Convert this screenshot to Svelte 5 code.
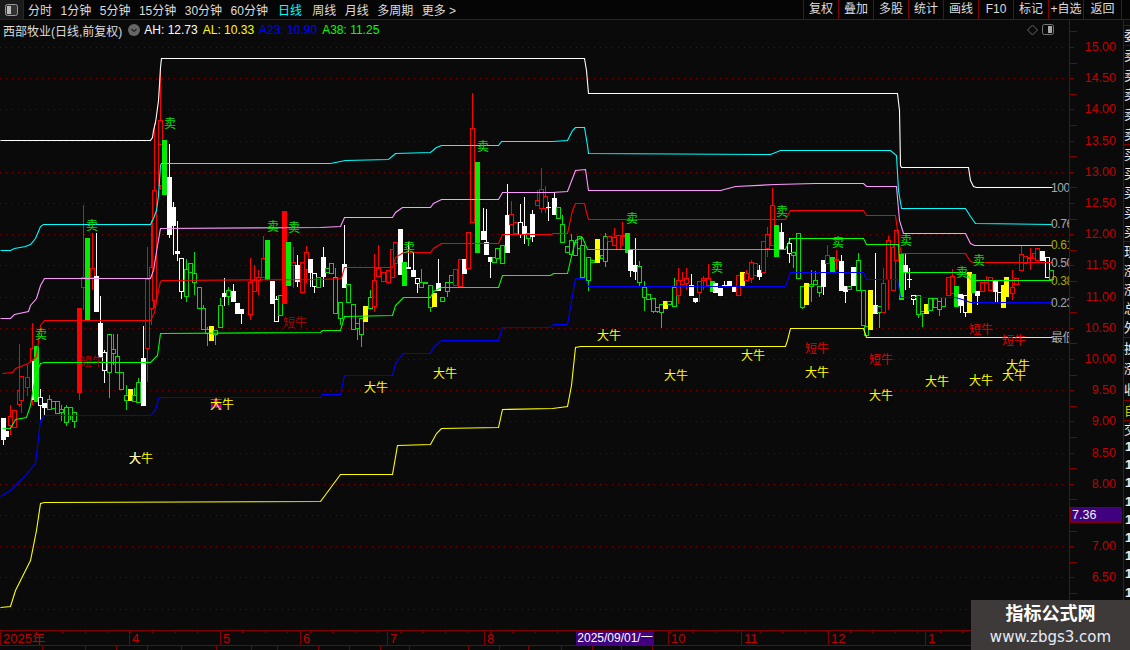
<script>
  const navItems = ['分时','1分钟','5分钟','15分钟','30分钟','60分钟','日线','周线','月线','多周期','更多 >'];
  const toolItems = ['复权','叠加','多股','统计','画线','F10','标记','+自选','返回'];
  const Y = (p) => 47 + (15 - p) * 62.4;
  const majors = [];
  for (let p = 15; p >= 6; p -= 0.5) majors.push(p);
  const axisTicks = [];
  for (let y = 31.4; y < 625; y += 15.6) axisTicks.push(y);

  const lines = [
    ['#ffffff','0,140 150,140 152,137 153,130 155,122 156,115 158,100 159,84 160,67 161,58 584,58 586,70 588,93 897,93 899,110 900,165 901,167 968,167 970,180 973,186 976,187 1052,187'],
    ['#00ffff','0,250 10,250 14,248 25,246 30,244 35,238 40,226 43,224 150,224 153,218 156,210 158,195 160,165 161,163 330,163 345,160 388,159 395,153 430,152 436,147 441,145 498,145 501,141 552,141 567,140 572,130 575,127 584,127 587,145 588,153 770,154 780,150 890,150 896,155 898,190 901,208 965,208 970,216 975,223 1052,224'],
    ['#ff99ff','0,318 10,318 14,314 28,311 30,305 36,298 40,285 44,278 150,278 153,270 157,245 160,228 320,227 340,226 344,217 392,217 395,212 402,207 430,207 433,203 441,199 498,199 502,192 552,192 567,191 572,178 575,170 585,169 588,190 720,190 735,186 775,184 815,183 863,183 866,186 896,186 899,220 903,233 965,233 970,243 974,245 1052,245'],
    ['#ff0000','2,373 12,372 15,368 20,366 28,363 36,356 40,325 44,320 150,320 154,312 158,290 160,281 161,280 320,279 341,278 344,267 392,267 395,257 403,252 430,252 433,248 441,243 498,243 502,234 550,234 553,233 567,233 572,210 575,203 584,203 586,212 588,219 785,219 790,210 863,210 866,215 895,215 899,245 901,253 965,253 970,261 973,262 1052,262'],
    ['#00ff00','2,428 10,428 15,419 26,417 30,405 35,375 40,363 44,362 150,362 157,355 160,333 320,332 322,330 340,330 344,316 392,315 395,305 403,297 430,297 433,291 441,287 498,287 502,275 550,275 553,273 567,273 570,260 575,240 582,237 587,249 785,249 790,238 863,238 866,244 898,244 900,272 965,272 970,279 973,280 1052,280'],
    ['#0000ff','0,496 10,490 25,475 35,463 40,420 44,415 150,415 155,410 158,398 160,397 320,397 322,394 340,394 344,375 392,375 395,363 403,353 430,353 433,347 441,340 498,340 502,327 550,327 553,324 567,324 570,307 575,278 584,278 588,286 785,286 790,272 863,272 866,279 897,279 900,297 955,297 965,300 970,302 1052,302'],
    ['#ffff00','0,607 10,606 15,590 25,570 30,560 36,530 40,503 44,502 320,501 340,474 392,474 397,445 430,444 436,433 441,428 498,427 502,409 552,408 567,406 571,385 575,347 580,346 785,346 787,340 790,328 863,328 866,337 1052,337']
  ];

  const raw = `3 W 418 440 418 445;6 W 431 437 0 0;10 R 416 425 405 435;14 R 410 427 0 0;19 R 390 404 344 407;21 R 376 400 0 413;27 R 377 387 365 396;32 R 348 360 323 405;34 W 361 400 0 0;36 B 346 402 0 0;40 T 397 405 389 420;44 W 403 408 0 415;49 G 399 409 395 0;53 G 401 408 0 0;57 G 401 413 0 0;61 G 409 412 405 421;66 G 407 422 405 426;70 G 407 415 0 420;74 G 412 421 0 428;
79 F 308 393 0 400;83 R 277 287 205 310;87 B 238 320 0 0;92 R 268 277 233 290;96 W 276 312 233 0;100 W 323 358 296 0;104 T 352 370 350 383;109 G 334 372 0 398;113 G 349 353 334 365;117 G 356 372 334 0;121 G 372 389 0 0;126 G 395 400 385 410;130 Y 389 401 0 0;134 G 395 401 388 0;138 G 382 402 378 0;143 W 358 406 326 0;147 R 279 348 247 382;151 R 267 308 220 325;154 R 190 300 123 308;160 R 120 144 67 190;160 R 144 185 0 0;164 B 140 195 0 0;169 W 177 235 144 238;173 W 207 226 202 255;177 W 251 254 221 261;181 T 258 291 0 299;186 G 269 296 259 302;190 G 263 272 0 0;194 G 273 282 252 295;199 G 287 308 0 0;203 G 308 329 305 0;207 G 329 333 327 346;211 Y 326 341 0 0;215 G 330 334 0 345;220 G 305 327 298 0;224 W 293 297 278 306;228 G 290 296 287 305;233 W 291 302 284 0;237 W 303 314 0 0;241 W 309 314 0 324;250 R 282 314 258 320;254 R 280 291 265 0;258 R 277 280 270 295;263 R 258 277 236 0;267 B 240 280 0 0;272 W 281 304 0 0;276 T 299 321 296 0;280 G 295 315 0 0;
284 F 211 304 0 0;288 B 242 286 0 0;293 R 262 265 247 288;297 W 265 282 255 287;302 R 262 292 0 0;306 R 252 269 246 283;310 W 259 273 0 287;314 T 273 286 0 293;318 G 277 287 0 0;323 W 257 277 247 287;327 G 268 272 0 0;331 G 263 273 0 0;335 G 277 313 268 0;340 G 302 318 0 325;344 W 264 288 225 0;348 G 284 302 0 0;353 G 304 329 0 0;357 G 323 328 0 340;361 G 318 334 0 347;365 Y 306 322 0 0;370 G 297 308 290 0;374 R 280 306 254 312;378 R 268 276 245 0;383 R 272 281 0 0;388 R 270 282 0 0;392 R 249 277 0 0;395 R 242 263 0 0;400 W 229 275 0 0;404 B 262 286 0 0;408 W 267 269 242 0;413 W 270 277 253 0;417 T 278 283 0 293;421 G 282 287 269 0;425 G 282 283 0 0;430 G 285 307 0 312;434 Y 293 307 0 0;438 W 283 291 259 0;442 G 297 301 0 0;447 G 282 291 0 297;451 G 275 282 0 0;455 R 269 285 0 0;460 R 259 286 0 0;464 W 259 274 0 0;468 R 232 268 0 0;472 R 128 222 93 0;477 B 162 253 0 0;483 W 231 240 208 0;486 W 242 255 209 0;490 W 257 262 0 278;494 G 257 262 0 0;497 G 248 258 0 0;502 G 245 263 0 0;507 W 215 253 184 0;511 R 214 224 201 0;515 R 222 233 0 0;520 T 222 234 204 238;524 W 226 235 197 244;528 G 233 238 0 246;532 W 214 237 210 242;537 R 200 205 190 0;541 R 189 208 168 213;545 R 196 208 186 213;548 W 207 208 202 221;554 W 198 215 192 0;558 G 207 218 0 0;562 G 224 242 215 0;567 G 246 252 0 0;571 G 240 254 234 0;575 G 242 255 0 0;579 G 236 248 0 0;
582 G 245 277 0 0;588 G 257 280 0 291;592 G 260 262 0 0;597 Y 239 263 0 0;602 G 255 258 0 0;605 G 236 261 233 267;609 R 236 241 0 0;614 R 237 245 228 0;618 R 235 249 0 0;622 R 235 236 222 246;627 B 233 253 0 0;630 W 250 271 0 277;635 W 265 272 238 280;639 G 266 282 261 286;644 G 287 297 281 311;648 G 294 299 0 0;653 G 298 311 0 313;657 G 307 311 0 313;661 G 304 312 0 328;665 Y 301 309 0 0;669 G 301 304 0 0;674 G 287 306 278 0;678 R 280 295 268 304;682 R 280 284 272 0;686 R 278 283 268 290;691 W 285 296 274 0;695 W 298 302 0 303;699 R 281 292 0 302;703 R 278 280 276 290;708 R 278 285 264 0;712 B 281 292 0 0;715 W 283 293 0 0;720 W 288 296 0 0;724 W 285 287 281 0;729 W 281 287 0 0;734 W 287 292 0 0;738 R 275 295 0 0;742 Y 272 287 0 0;746 R 273 280 270 0;751 R 262 278 260 283;755 R 263 275 0 0;759 W 270 277 265 280;763 R 241 272 0 0;767 R 234 248 227 257;772 R 205 245 188 0;776 B 225 257 0 0;781 W 232 249 223 0;789 T 243 253 238 263;793 G 252 255 0 268;798 G 233 278 0 0;802 G 286 307 0 309;806 Y 283 305 0 0;811 G 284 286 270 302;815 G 280 284 271 0;819 G 286 292 0 297;823 W 260 287 0 295;827 R 255 263 245 0;832 B 257 273 0 0;836 R 259 260 250 270;841 W 261 291 255 0;845 W 286 292 0 303;849 G 286 289 0 0;853 W 267 286 0 0;
858 G 260 290 253 0;863 G 290 325 0 0;866 G 326 335 0 0;870 Y 290 330 0 0;875 W 305 314 253 0;879 G 306 312 0 328;883 R 283 312 268 0;888 R 240 279 236 310;893 R 247 290 245 0;896 R 230 260 0 0;901 B 254 300 0 0;905 W 265 273 254 290;909 W 279 280 268 288;913 T 295 299 0 305;918 G 295 314 0 318;922 G 311 313 0 327;926 Y 304 314 0 0;930 G 298 310 0 0;935 G 298 307 0 0;939 G 301 309 0 316;943 G 297 306 0 0;948 R 277 295 0 0;952 R 276 293 269 0;956 B 286 307 0 0;960 W 294 306 0 313;965 T 295 312 0 317;969 Y 272 313 0 0;973 B 274 293 0 0;977 W 291 296 0 305;982 R 282 291 0 0;986 R 280 282 276 0;990 R 277 290 0 0;995 W 281 292 0 302;999 T 292 302 0 0;1003 Y 285 308 0 0;1006 Y 277 297 0 0;1012 R 287 293 270 300;1016 R 278 284 0 0;1021 R 254 270 246 0;1025 R 256 263 0 0;1030 R 257 258 248 270;1034 R 253 258 0 0;1037 R 248 260 0 0;1042 W 251 261 0 0;1047 T 257 277 0 0;1051 G 270 279 0 0`;

  const colors = { R:'#ff0000', G:'#00e000', W:'#ffffff', T:'#ffffff', Y:'#ffff00', B:'#00ee00', F:'#ff0000' };
  const candles = raw.split(';').map((s) => {
    const [x, t, top, bot, hi, lo] = s.trim().split(' ');
    return { x:+x, t, top:+top, bot:+bot, hi:+hi || +top, lo:+lo || +bot, c:colors[t], solid:'WYBF'.includes(t) };
  });

  const sell = [[41,334],[92,225],[170,123],[273,226],[294,227],[409,247],[483,146],[632,218],[717,267],[782,211],[838,242],[906,240],[962,272],[979,260]];
  const big = [[141,458],[222,404],[376,387],[445,373],[609,335],[676,375],[753,355],[817,372],[881,395],[937,381],[981,380],[1014,375],[1018,365]];
  const short = [[92,361,'dim'],[295,322,'dim'],[817,348,''],[881,359,''],[981,329,''],[1014,340,'']];
  const ends = [['100',187,'gray'],['0.76',223,'gray'],['0.61',244,'olive'],['0.50',262,'gray'],['0.38',280,'olive'],['0.23',302,'gray'],['最低',337,'gray']];

  const months = [[0,'2025年'],[129,'4'],[220,'5'],[300,'6'],[387,'7'],[484,'8'],[668,'10'],[741,'11'],[828,'12'],[925,'1']];
  const timeTicks = [];
  for (let x = 62; x < 970; x += 22.5) timeTicks.push(Math.round(x));

  const side = [
    { h:20, t:['委'], k:'' }, { h:99, t:['卖','卖','卖','卖','卖'], k:'' }, { h:97, t:['买','买','买','买','买'], k:'' },
    { h:96, t:['现','涨','涨','总','外'], k:'' }, { h:63, t:['换','涨','收'], k:'' }, { h:20, t:['自'], k:'yel' }, { h:18, t:['交'], k:'' }
  ];
  const digits = Array(9).fill('1');
  const statusCells = [42, 42, 30, 30, 33, 34, 34, 25, 40, 30, 30, 28, 58, 30, 28, 32, 30, 28, 30];
</script>

<div class="app">
  <header class="top">
    <div class="logo">
      <svg width="13" height="12" viewBox="0 0 13 12"><rect x="0.5" y="0.5" width="12" height="11" rx="2" fill="#333" stroke="#999"/><rect x="2" y="2" width="4" height="8" fill="#bbb"/></svg>
    </div>
    <nav class="nav">
      {#each navItems as n}
        <span class:on={n === '日线'}>{n}</span>
      {/each}
    </nav>
    <div class="tools">
      {#each toolItems as t}
        <span>{t}</span>
      {/each}
    </div>
  </header>

  <div class="main">
    <section class="chartcol">
      <div class="info">
        <span class="name">西部牧业(日线,前复权)</span>
        <svg class="chev" width="12" height="12" viewBox="0 0 12 12"><circle cx="6" cy="6" r="6" fill="#666"/><path d="M3.5 5l2.5 2.5L8.500 5" fill="none" stroke="#222" stroke-width="1.200"/></svg>
        <span class="val white">AH: 12.73</span>
        <span class="val yel">AL: 10.33</span>
        <span class="val blue">A23: 10.90</span>
        <span class="val green">A38: 11.25</span>
        <svg class="corner" width="40" height="14" viewBox="0 0 40 14">
          <path d="M5.500 2l5 5-5 5-5-5z" fill="none" stroke="#666"/>
          <rect x="15.500" y="1.500" width="11" height="10" rx="2" fill="none" stroke="#777"/>
          <rect x="21" y="3" width="4" height="7" fill="#aaa"/>
        </svg>
      </div>
      <svg class="chart" width="1070" height="590" viewBox="0 40 1070 590">
        {#each majors as p}
          <line class="grid" x1="0" x2="1068" y1={Math.round(Y(p)) + 0.5} y2={Math.round(Y(p)) + 0.5} />
        {/each}
        <g shape-rendering="crispEdges">
          {#each candles as k}
            <line x1={k.x + 0.5} x2={k.x + 0.5} y1={k.hi} y2={k.lo} stroke={k.c} />
            {#if k.solid}
              <rect x={k.x - 2} y={k.top} width="5" height={k.bot - k.top} fill={k.c} />
            {:else}
              <rect x={k.x - 1.5} y={k.top + 0.5} width="4" height={Math.max(1, k.bot - k.top)} fill="#0a0a0a" stroke={k.c} />
            {/if}
          {/each}
        </g>
        <g transform="translate(0.5 0.5)">
          {#each lines as l}
            <polyline points={l[1]} fill="none" stroke={l[0]} stroke-width="1.100" />
          {/each}
        </g>
        {#each ends as e}
          <text class="end {e[2]}" x="1051" y={e[1] + 5}>{e[0]}</text>
        {/each}
        {#each sell as s}
          <text class="mark sell" x={s[0]} y={s[1] + 5}>卖</text>
        {/each}
        <text class="mark pink" x="216" y="409">两</text>
        {#each big as b}
          <text class="mark big" x={b[0]} y={b[1] + 5}>大牛</text>
        {/each}
        <text class="mark pale" x="135" y="463">大</text>
        {#each short as s}
          <text class="mark short {s[2]}" x={s[0]} y={s[1] + 5}>短牛</text>
        {/each}
      </svg>
    </section>

    <aside class="axis">
      <svg width="52" height="610" viewBox="0 20 52 610">
        <g shape-rendering="crispEdges">
          {#each axisTicks as y, i}
            <line class="tick" x1="0" x2={i % 2 === 0 ? 7 : 4} y1={Math.round(y) + 0.5} y2={Math.round(y) + 0.5} />
          {/each}
        </g>
        {#each majors.slice(0, 18) as p}
          {#if p !== 7.5}
            <text class="price" x="46" y={Y(p) + 4}>{p.toFixed(2)}</text>
          {/if}
        {/each}
        <rect class="tag" x="0" y="507" width="52" height="15" shape-rendering="crispEdges" />
        <text class="tagtext" x="2" y="519">7.36</text>
      </svg>
    </aside>

    <aside class="side">
      <div class="gap"></div>
      {#each side as c}
        <div class="cell {c.k}" style:height="{c.h}px">
          {#each c.t as g}<span>{g}</span>{/each}
        </div>
      {/each}
      {#each digits as d}
        <div class="num">{d}</div>
      {/each}
    </aside>
  </div>

  <footer class="time">
    {#each timeTicks as x}
      <i class="tt" style:left="{x}px"></i>
    {/each}
    {#each months as m}
      <span class="month" style:left="{m[0]}px">{m[1]}</span>
    {/each}
    <span class="cursor">2025/09/01/一</span>
  </footer>
  <div class="status">
    {#each statusCells as w}
      <i style:width="{w}px"></i>
    {/each}
  </div>

  <div class="mark-box">
    <b>指标公式网</b>
    <em>www.zbgs3.com</em>
  </div>
</div>

<style>
  :global(body) { margin: 0; background: #0a0a0a; }
  .app {
    position: relative;
    width: 1130px;
    height: 650px;
    overflow: hidden;
    background: #0a0a0a;
    color: #ddd;
    font: 12px "Liberation Sans", "Noto Sans CJK SC", sans-serif;
    display: flex;
    flex-direction: column;
  }
  .top {
    height: 19px;
    border-bottom: 1px solid #800000;
    display: flex;
    align-items: stretch;
    flex: none;
    background: #050505;
  }
  .logo {
    width: 23px;
    border-right: 1px solid #800000;
    display: flex;
    align-items: center;
    justify-content: center;
    background: #1a1a1a;
  }
  .nav {
    display: flex;
    align-items: center;
    gap: 8.500px;
    padding-left: 4px;
    flex: 1;
    white-space: nowrap;
  }
  .nav span.on { color: #00ffff; margin-left: 1.500px; margin-right: 1.700px; }
  .tools { display: flex; margin-right: 8px; }
  .tools span {
    width: 34px;
    border-left: 1px solid #800000;
    text-align: center;
    line-height: 19px;
    white-space: nowrap;
  }
  .tools span:last-child { width: 37px; border-right: 1px solid #800000; }
  .main { display: flex; height: 610px; flex: none; }
  .chartcol { width: 1070px; flex: none; display: flex; flex-direction: column; }
  .info {
    height: 20px;
    flex: none;
    display: flex;
    align-items: center;
    padding-left: 3px;
    white-space: nowrap;
  }
  .name { color: #ddd; }
  .chev { margin: 0 4px 0 6px; }
  .val { margin-right: 5px; }
  .white { color: #fff; }
  .yel { color: #ffff00; }
  .blue { color: #0000ff; }
  .green { color: #00ff00; }
  .corner { margin-left: auto; margin-right: 3px; }
  .chart { display: block; }
  .grid { stroke: #7a0000; stroke-dasharray: 1 5; }
  .end { font-size: 12px; letter-spacing: -0.4px; }
  .gray { fill: #a8a8a8; }
  .olive { fill: #a8a800; }
  .mark { font-size: 12px; text-anchor: middle; }
  .sell { fill: #00e000; }
  .big { fill: #ffff00; }
  .short { fill: #e00000; }
  .dim { fill: #b00000; }
  .pink { fill: #ff00ff; }
  .pale { fill: #f4f4c0; }
  .axis { width: 52px; flex: none; border-left: 1px solid #800000; margin-left: -1px; overflow: hidden; }
  .axis svg { display: block; }
  .tick { stroke: #800000; }
  .price { fill: #c00000; font-size: 12.500px; text-anchor: end; }
  .tag { fill: #400080; stroke: #800000; }
  .tagtext { fill: #eee; font-size: 12.500px; }
  .side {
    width: 8px;
    flex: none;
    margin-left: 1px;
    border-left: 1px solid #800000;
    overflow: hidden;
    font-size: 13px;
    color: #eee;
  }
  .gap { height: 5px; }
  .cell {
    border-top: 1px solid #800000;
    box-sizing: border-box;
    display: flex;
    flex-direction: column;
    justify-content: space-around;
    line-height: 13px;
    overflow: hidden;
  }
  .cell.yel { color: #c8c800; }
  .num { height: 18.200px; line-height: 18px; font-weight: bold; font-size: 13px; color: #eee; padding-left: 1px; }
  .time {
    position: relative;
    height: 16px;
    flex: none;
    box-sizing: border-box;
    border-top: 1px solid #800000;
    border-bottom: 1px solid #800000;
    overflow: hidden;
  }
  .tt { position: absolute; top: 0; width: 1px; height: 2px; background: #800000; }
  .month {
    position: absolute;
    top: 0;
    height: 15px;
    line-height: 16px;
    padding-left: 2px;
    border-left: 1px solid #800000;
    color: #c00000;
    font-size: 13px;
  }
  .cursor {
    position: absolute;
    left: 576px;
    top: 0;
    width: 78px;
    height: 14px;
    line-height: 14px;
    text-align: center;
    background: #400080;
    color: #fff;
    white-space: nowrap;
  }
  .status { flex: 1; display: flex; }
  .status i { display: block; border-right: 1px solid #800000; }
  .mark-box {
    position: absolute;
    left: 971px;
    top: 600px;
    width: 159px;
    height: 50px;
    background: #3f3a3a;
    display: flex;
    flex-direction: column;
    align-items: center;
    color: #fff;
  }
  .mark-box b { font-size: 18px; line-height: 27px; font-weight: bold; margin-top: 1px; }
  .mark-box em { font-style: normal; font-size: 15px; line-height: 18px; color: #e4ecf8; font-family: "DejaVu Sans", sans-serif; }
</style>
